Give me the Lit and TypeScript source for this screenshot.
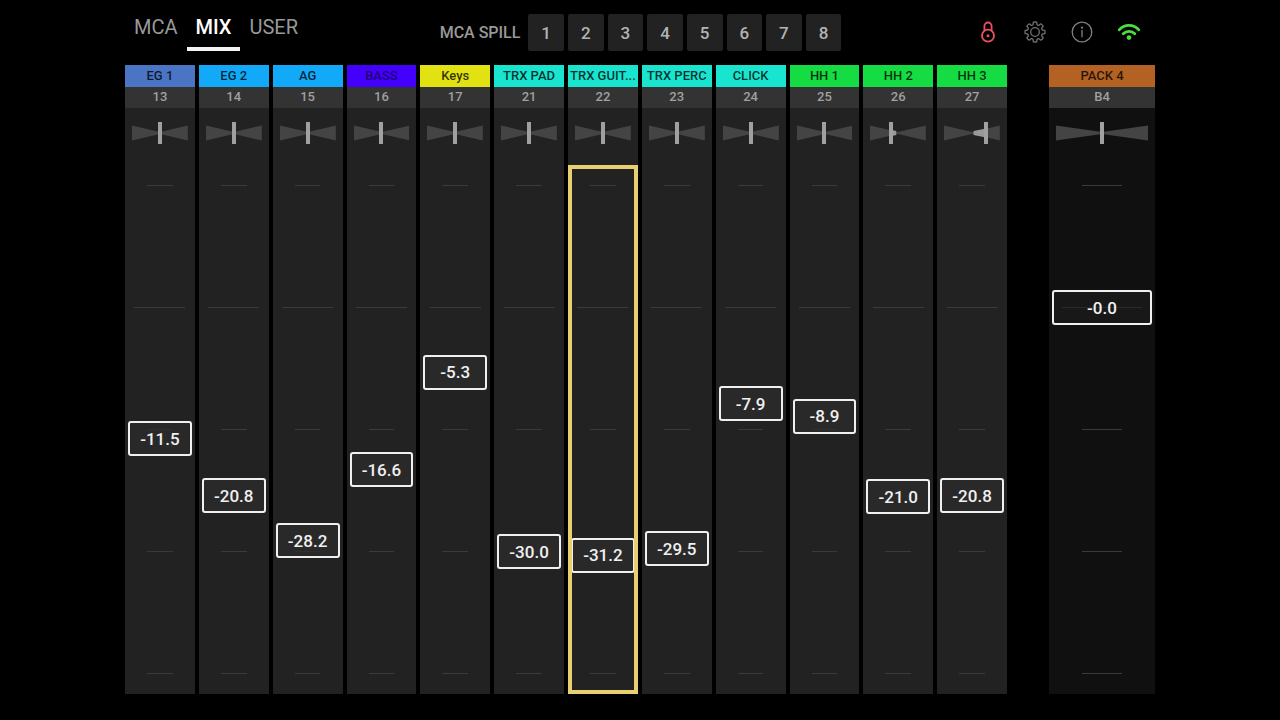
import { LitElement, html, css, svg } from "lit";
import { customElement, property, state } from "lit/decorators.js";
import { classMap } from "lit/directives/class-map.js";

interface Channel {
  name: string;
  id: string;
  tone: string;
  level: number;
  pan: number;
}

const CHANNELS: Channel[] = [
  { name: "EG 1", id: "13", tone: "slate", level: -11.5, pan: 0 },
  { name: "EG 2", id: "14", tone: "sky", level: -20.8, pan: 0 },
  { name: "AG", id: "15", tone: "sky", level: -28.2, pan: 0 },
  { name: "BASS", id: "16", tone: "violet", level: -16.6, pan: 0 },
  { name: "Keys", id: "17", tone: "yellow", level: -5.3, pan: 0 },
  { name: "TRX PAD", id: "21", tone: "teal", level: -30.0, pan: 0 },
  { name: "TRX GUIT...", id: "22", tone: "teal", level: -31.2, pan: 0 },
  { name: "TRX PERC", id: "23", tone: "teal", level: -29.5, pan: 0 },
  { name: "CLICK", id: "24", tone: "teal", level: -7.9, pan: 0 },
  { name: "HH 1", id: "25", tone: "green", level: -8.9, pan: 0 },
  { name: "HH 2", id: "26", tone: "green", level: -21.0, pan: -27 },
  { name: "HH 3", id: "27", tone: "green", level: -20.8, pan: 55 },
];

const MASTER: Channel = { name: "PACK 4", id: "B4", tone: "orange", level: -0.04, pan: 0 };

// Fader law: each scale mark, top to bottom, is one quarter of the travel.
const SCALE = [10, 0, -10, -30, -70];

function levelToTravel(db: number): number {
  for (let i = 0; i < SCALE.length - 1; i++) {
    if (db >= SCALE[i + 1]) {
      return (i + (SCALE[i] - db) / (SCALE[i] - SCALE[i + 1])) * 25;
    }
  }
  return 100;
}

function travelToLevel(travel: number): number {
  const i = Math.min(3, Math.floor(travel / 25));
  return SCALE[i] - (travel / 25 - i) * (SCALE[i] - SCALE[i + 1]);
}

@customElement("channel-strip")
class ChannelStrip extends LitElement {
  @property({ attribute: false }) channel!: Channel;
  @property({ type: Boolean, reflect: true }) selected = false;
  @property({ type: Boolean, reflect: true }) master = false;
  @state() private level?: number;
  @state() private pan?: number;

  static styles = css`
    :host {
      display: flex;
      flex-direction: column;
      min-width: 0;
      background: #222;
    }
    :host([master]) {
      background: #101010;
    }
    .name {
      display: block;
      height: 22px;
      line-height: 22px;
      font-size: 13px;
      font-weight: 500;
      text-align: center;
      white-space: nowrap;
      overflow: hidden;
      color: rgba(0, 0, 0, 0.78);
    }
    .slate { background: #4a74c4; }
    .sky { background: #12aaf8; }
    .violet { background: #4300fb; color: rgba(0, 0, 0, 0.55); }
    .yellow { background: #e2e112; }
    .teal { background: #19e4d0; }
    .green { background: #15dc43; }
    .orange { background: #b46223; }
    .id {
      height: 21px;
      line-height: 20px;
      font-size: 13px;
      font-weight: 500;
      text-align: center;
      color: #a0a0a0;
      background: #333;
    }
    .pan {
      display: grid;
      height: 22px;
      padding: 14px 7px 21px;
    }
    .pan > * {
      grid-area: 1 / 1;
      width: 100%;
      height: 22px;
      min-width: 0;
      margin: 0;
    }
    .wing { fill: #444; }
    .shift { fill: #999; }
    input {
      appearance: none;
      background: none;
      outline: none;
    }
    input::-webkit-slider-runnable-track { background: none; }
    .pan input::-webkit-slider-thumb {
      appearance: none;
      width: 4px;
      height: 22px;
      background: #a0a0a0;
    }
    .fader {
      flex: 1;
      display: grid;
      grid-template: minmax(0, 1fr) / minmax(0, 1fr);
      padding: 3px;
      position: relative;
    }
    .marks,
    .fader input,
    .rail {
      grid-area: 1 / 1;
    }
    .marks {
      display: flex;
      flex-direction: column;
      justify-content: space-between;
      align-items: center;
      padding: 17px 0;
    }
    .mark {
      width: 40%;
      height: 1px;
      background: #3a3a3a;
    }
    .unity { width: 80%; }
    .fader input {
      writing-mode: vertical-lr;
      width: 100%;
      height: 100%;
      margin: 0;
      min-height: 0;
    }
    .fader input::-webkit-slider-thumb {
      appearance: none;
      box-sizing: border-box;
      width: 100%;
      height: 35px;
      border: 2px solid #f0f0f0;
      border-radius: 3px;
      background: rgba(44, 44, 44, 0.7);
    }
    :host([master]) .fader input::-webkit-slider-thumb {
      background: rgba(30, 30, 30, 0.6);
    }
    .fader input::-webkit-slider-runnable-track {
      width: 100%;
      height: 100%;
    }
    .rail {
      position: relative;
      margin: 17px 0;
      pointer-events: none;
    }
    .value {
      position: absolute;
      left: 0;
      right: 0;
      height: 20px;
      line-height: 20px;
      margin-top: -10px;
      text-align: center;
      font-size: 17px;
      font-weight: 500;
      color: #f0f0f0;
    }
    .ring {
      position: absolute;
      inset: 0;
      border: 4px solid #e8cf72;
      pointer-events: none;
    }
  `;

  render() {
    const c = this.channel;
    const level = this.level ?? c.level;
    const pan = this.pan ?? c.pan;
    const travel = levelToTravel(level);
    const x = 50 + pan * 0.46;
    const spread = 2 + Math.abs(pan) * 0.045;
    return html`
      <label class="name ${c.tone}" for="level">${c.name}</label>
      <div class="id">${c.id}</div>
      <div class="pan">
        <svg viewBox="0 0 100 22" preserveAspectRatio="none" aria-hidden="true">
          <polygon class="wing" points="0,3.5 50,10 100,3.5 100,18.5 50,12 0,18.5"></polygon>
          ${pan
            ? svg`<polygon class="shift" points="${50 + Math.sign(pan) * 3},${9} ${x},${11 - spread} ${x},${11 + spread} ${50 + Math.sign(pan) * 3},${13}"></polygon>`
            : null}
        </svg>
        <input type="range" min="-100" max="100" aria-label="Pan ${c.name}" .value=${String(pan)}
          @input=${(e: Event) => (this.pan = Number((e.target as HTMLInputElement).value))} />
      </div>
      <div class="fader">
        <div class="marks">
          ${SCALE.map((db) => html`<div class=${classMap({ mark: true, unity: db === 0 })}></div>`)}
        </div>
        <input id="level" type="range" min="0" max="100" step="any" .value=${String(travel)}
          @input=${(e: Event) => (this.level = travelToLevel(Number((e.target as HTMLInputElement).value)))} />
        <div class="rail">
          <output class="value" for="level" style="top:${travel}%">${level.toFixed(1)}</output>
        </div>
        ${this.selected ? html`<div class="ring"></div>` : null}
      </div>
    `;
  }
}

function gearPath(): string {
  const teeth = 8;
  const step = (Math.PI * 2) / teeth;
  const at = (r: number, a: number) =>
    `${(12 + r * Math.sin(a)).toFixed(2)} ${(12 - r * Math.cos(a)).toFixed(2)}`;
  let d = "";
  for (let i = 0; i < teeth; i++) {
    const a = i * step;
    d += `${i ? "L" : "M"}${at(7.7, a - 0.26)}L${at(10, a - 0.17)}A10 10 0 0 1 ${at(10, a + 0.17)}L${at(7.7, a + 0.26)}`;
    d += `Q${at(6.9, a + step / 2)} ${at(7.7, a + step - 0.26)}`;
  }
  return d + "Z";
}

const ICONS = [
  {
    label: "Lock",
    cls: "lock",
    art: svg`<circle cx="12" cy="15.7" r="6"></circle><path d="M8.4 10.4V6.1a3.6 3.6 0 0 1 7.2 0v4.3"></path><circle class="solid" cx="12" cy="15.7" r="1.5"></circle>`,
  },
  {
    label: "Settings",
    cls: "gear",
    art: svg`<path d=${gearPath()}></path><circle cx="12" cy="12" r="4.3"></circle>`,
  },
  {
    label: "Information",
    cls: "info",
    art: svg`<circle cx="12" cy="12" r="9.8"></circle><path d="M12 10.4v6.4"></path><circle class="solid" cx="12" cy="7.7" r="1.1"></circle>`,
  },
  {
    label: "Network",
    cls: "wifi",
    art: svg`<path d="M2.2 9.8A13 13 0 0 1 21.8 9.8M6.2 13.8A8 8 0 0 1 17.8 13.8"></path><circle class="solid" cx="12" cy="17.6" r="2.3"></circle>`,
  },
];

@customElement("app-root")
class AppRoot extends LitElement {
  @state() private tab = "MIX";
  @state() private current = 6;

  static styles = css`
    :host {
      display: flex;
      flex-direction: column;
      box-sizing: border-box;
      min-height: 100vh;
      padding: 0 125px 26px;
      background: #000;
      font-family: Roboto, "Open Sans", sans-serif;
    }
    button {
      font: inherit;
      margin: 0;
      border: 0;
      background: none;
      cursor: pointer;
    }
    .bar {
      display: flex;
      justify-content: space-between;
      align-items: flex-start;
      height: 65px;
    }
    .tabs { display: flex; }
    .tab {
      padding: 8px 9px 0;
      line-height: 39px;
      font-size: 20px;
      color: #999;
      border-bottom: 4px solid transparent;
    }
    .active {
      color: #fff;
      font-weight: 500;
      border-color: #f4f4f4;
    }
    .spill {
      display: flex;
      align-items: center;
      gap: 8px;
      padding: 14px 2px 0 0;
      font-size: 16px;
      font-weight: 500;
      color: #999;
    }
    .groups {
      display: grid;
      grid-template-columns: repeat(8, 1fr);
      gap: 4px;
      width: 313px;
    }
    .group {
      height: 37px;
      padding: 0;
      font-size: 17px;
      color: #b4b4b4;
      background: #222;
      border-radius: 2px;
    }
    .icons {
      display: flex;
      gap: 23px;
      padding: 20px 14px 0 0;
    }
    .icon {
      display: block;
      width: 24px;
      height: 24px;
      padding: 0;
    }
    .icon svg {
      display: block;
      fill: none;
      stroke: currentColor;
      stroke-width: 1.3;
      stroke-linecap: round;
      stroke-linejoin: round;
    }
    .icon .solid {
      fill: currentColor;
      stroke: none;
    }
    .lock { color: #e4525f; }
    .lock svg { stroke-width: 1.8; }
    .gear { color: #707070; }
    .info { color: #808080; }
    .wifi { color: #48e03c; }
    .wifi svg { stroke-width: 2.8; }
    .deck {
      flex: 1;
      display: flex;
      gap: 42px;
    }
    .strips {
      flex: 1;
      display: grid;
      grid-template-columns: repeat(12, minmax(0, 1fr));
      gap: 4px;
    }
    .main { width: 106px; }
  `;

  render() {
    return html`
      <header class="bar">
        <nav class="tabs">
          ${["MCA", "MIX", "USER"].map(
            (t) => html`<button class=${classMap({ tab: true, active: t === this.tab })}
              @click=${() => (this.tab = t)}>${t}</button>`,
          )}
        </nav>
        <div class="spill">
          <span>MCA SPILL</span>
          <div class="groups">
            ${[1, 2, 3, 4, 5, 6, 7, 8].map((n) => html`<button class="group">${n}</button>`)}
          </div>
        </div>
        <div class="icons">
          ${ICONS.map(
            (i) => html`<button class="icon ${i.cls}" aria-label=${i.label}>
              <svg width="24" height="24" viewBox="0 0 24 24" aria-hidden="true">${i.art}</svg>
            </button>`,
          )}
        </div>
      </header>
      <main class="deck">
        <div class="strips">
          ${CHANNELS.map(
            (c, i) => html`<channel-strip .channel=${c} ?selected=${i === this.current}
              @click=${() => (this.current = i)}></channel-strip>`,
          )}
        </div>
        <channel-strip class="main" master .channel=${MASTER}></channel-strip>
      </main>
    `;
  }
}
